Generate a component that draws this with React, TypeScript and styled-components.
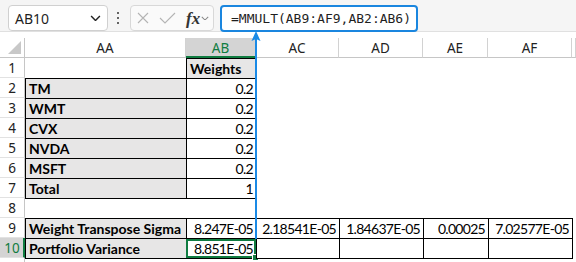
import React from 'react';
import styled, { createGlobalStyle } from 'styled-components';

const Global = createGlobalStyle`
  html, body { margin: 0; padding: 0; background: #fff; }
  body { width: 576px; height: 262px; overflow: hidden; }
`;

const Root = styled.div`
  position: relative;
  width: 576px;
  height: 262px;
  overflow: hidden;
  background: #fff;
`;

const Toolbar = styled.div`
  box-sizing: border-box;
  height: 32px;
  padding: 5px 0 0 8px;
  background: #f5f5f5;
  border-bottom: 1px solid #e0e0e0;
  display: flex;
  align-items: flex-start;
`;

const NameBox = styled.div`
  box-sizing: border-box;
  width: 100px;
  height: 26px;
  background: #fff;
  border: 1px solid #d0d0d0;
  border-radius: 4px;
  display: flex;
  align-items: center;
  justify-content: space-between;
  padding: 0 6px 0 6px;
  font-family: 'Noto Sans', sans-serif;
  font-size: 14px;
  color: #1f1f1f;
`;

const MenuDots = styled.div`
  width: 4px;
  margin: 7px 8px 0 8px;
  display: flex;
  flex-direction: column;
  align-items: center;
  gap: 3px;
  & > span {
    width: 2px;
    height: 2px;
    background: #333;
    border-radius: 1px;
  }
`;

const FxGroup = styled.div`
  box-sizing: border-box;
  width: 84px;
  height: 26px;
  margin-left: 2px;
  border: 1px solid #d8d8d8;
  border-radius: 4px;
  background: #fafafa;
  display: flex;
  align-items: center;
  padding: 0 0 0 6px;
`;

const FxLabel = styled.span`
  font-family: 'Liberation Serif', serif;
  font-style: italic;
  font-weight: 700;
  font-size: 17px;
  color: #333;
  margin: 0 1px 0 10px;
  line-height: 1;
`;

const FormulaBox = styled.div`
  box-sizing: border-box;
  width: 198px;
  height: 27px;
  margin-left: 6px;
  border: 2px solid #1a86df;
  border-radius: 4px;
  background: #fff;
  display: flex;
  align-items: center;
  padding-left: 9px;
  font-family: 'DejaVu Sans Mono', monospace;
  font-size: 13px;
  color: #1f1f1f;
`;

const Sheet = styled.div`
  margin-top: 6px;
  display: grid;
  grid-template-columns: 25px 161px 70px 83px 84px 65px 84px 4px;
  grid-auto-rows: 20px;
`;

const Corner = styled.div`
  box-sizing: border-box;
  border-right: 1px solid #c6c6c6;
  border-bottom: 1px solid #c6c6c6;
  display: flex;
  align-items: flex-end;
  justify-content: flex-end;
  padding: 0 3px 3px 0;
`;

const ColHeader = styled.div<{ $active?: boolean }>`
  box-sizing: border-box;
  display: flex;
  align-items: center;
  justify-content: center;
  font-family: 'Noto Sans', sans-serif;
  font-size: 13.5px;
  color: ${(p) => (p.$active ? '#107c41' : '#222')};
  background: ${(p) => (p.$active ? '#d4d4d4' : '#fff')};
  border-right: 1px solid #d2d2d2;
  border-bottom: ${(p) => (p.$active ? '2px solid #107c41' : '1px solid #c6c6c6')};
  padding-top: ${(p) => (p.$active ? '1px' : '0')};
`;

const RowHeader = styled.div<{ $active?: boolean }>`
  box-sizing: border-box;
  display: flex;
  align-items: center;
  justify-content: center;
  font-family: 'Noto Sans', sans-serif;
  font-size: 13.5px;
  color: ${(p) => (p.$active ? '#107c41' : '#222')};
  background: ${(p) => (p.$active ? '#d4d4d4' : '#fff')};
  border-right: ${(p) => (p.$active ? '2px solid #107c41' : '1px solid #c6c6c6')};
  border-bottom: 1px solid #e2e2e2;
  padding-left: ${(p) => (p.$active ? '1px' : '0')};
`;

const Cell = styled.div<{ $boxed?: boolean; $gray?: boolean; $bold?: boolean; $right?: boolean }>`
  box-sizing: border-box;
  position: relative;
  min-width: 0;
  display: flex;
  align-items: flex-end;
  justify-content: ${(p) => (p.$right ? 'flex-end' : 'flex-start')};
  padding: 0 3px 0 3px;
  font-family: Lato, 'Liberation Sans', sans-serif;
  font-size: 14px;
  line-height: 18px;
  letter-spacing: ${(p) => (p.$right ? '-0.7px' : '0')};
  font-weight: ${(p) => (p.$bold ? 700 : 400)};
  color: #000;
  white-space: nowrap;
  background: ${(p) => (p.$boxed ? (p.$gray ? '#e7e6e6' : '#fff') : 'transparent')};
  border: ${(p) => (p.$boxed ? '1px solid #000' : '0')};
  margin: ${(p) => (p.$boxed ? '0 -1px -1px 0' : '0')};
`;

const Selection = styled.div`
  position: absolute;
  inset: 0 0 0 -1px;
  border: 2px solid #107c41;
  pointer-events: none;
  &::after {
    content: '';
    position: absolute;
    right: -5px;
    bottom: -5px;
    width: 5px;
    height: 5px;
    background: #107c41;
    border: 1px solid #fff;
  }
`;

const Arrow = styled.svg`
  position: absolute;
  left: 251px;
  top: 31px;
`;

type CellData = { t?: string; boxed?: boolean; gray?: boolean; bold?: boolean; right?: boolean; sel?: boolean };

const label = (t: string): CellData => ({ t, boxed: true, gray: true, bold: true });
const num = (t: string): CellData => ({ t, boxed: true, right: true });
const empty: CellData = {};

const rows: CellData[][] = [
  [empty, { t: 'Weights', boxed: true, gray: true, bold: true }, empty, empty, empty, empty, empty],
  [label('TM'), num('0.2'), empty, empty, empty, empty, empty],
  [label('WMT'), num('0.2'), empty, empty, empty, empty, empty],
  [label('CVX'), num('0.2'), empty, empty, empty, empty, empty],
  [label('NVDA'), num('0.2'), empty, empty, empty, empty, empty],
  [label('MSFT'), num('0.2'), empty, empty, empty, empty, empty],
  [label('Total'), num('1'), empty, empty, empty, empty, empty],
  [empty, empty, empty, empty, empty, empty, empty],
  [label('Weight Transpose Sigma'), num('8.247E-05'), num('2.18541E-05'), num('1.84637E-05'), num('0.00025'), num('7.02577E-05'), empty],
  [label('Portfolio Variance'), { ...num('8.851E-05'), sel: true }, num(''), num(''), num(''), num(''), empty],
  [empty, empty, empty, empty, empty, empty, empty],
];

const cols = ['AA', 'AB', 'AC', 'AD', 'AE', 'AF', ''];

const Chevron = ({ w = 10, color = '#333' }: { w?: number; color?: string }) => (
  <svg width={w} height={w * 0.6} viewBox="0 0 10 6">
    <path d="M1 1 L5 5 L9 1" fill="none" stroke={color} strokeWidth="1.3" />
  </svg>
);

export default function App() {
  return (
    <Root>
      <Global />
      <Toolbar>
        <NameBox>
          <span>AB10</span>
          <Chevron w={11} color="#222" />
        </NameBox>
        <MenuDots>
          <span />
          <span />
          <span />
        </MenuDots>
        <FxGroup>
          <svg width="12" height="12" viewBox="0 0 12 12">
            <path d="M1 1 L11 11 M11 1 L1 11" stroke="#b4b4b4" strokeWidth="1.1" fill="none" />
          </svg>
          <svg width="17" height="12" viewBox="0 0 17 12" style={{ marginLeft: 10 }}>
            <path d="M1 6 L6 11 L16 1" stroke="#b4b4b4" strokeWidth="1.1" fill="none" />
          </svg>
          <FxLabel>fx</FxLabel>
          <Chevron w={8} color="#888" />
        </FxGroup>
        <FormulaBox>=MMULT(AB9:AF9,AB2:AB6)</FormulaBox>
      </Toolbar>
      <Sheet>
        <Corner>
          <svg width="13" height="13" viewBox="0 0 13 13">
            <path d="M13 0 L13 13 L0 13 Z" fill="#c8c8c8" />
          </svg>
        </Corner>
        {cols.map((c, i) => (
          <ColHeader key={'h' + i} $active={c === 'AB'}>
            {c}
          </ColHeader>
        ))}
        {rows.map((r, ri) => (
          <React.Fragment key={'r' + ri}>
            <RowHeader $active={ri === 9}>{ri < 10 ? ri + 1 : ''}</RowHeader>
            {r.map((c, ci) => (
              <Cell key={ci} $boxed={c.boxed} $gray={c.gray} $bold={c.bold} $right={c.right}>
                {c.t}
                {c.sel && <Selection />}
              </Cell>
            ))}
          </React.Fragment>
        ))}
      </Sheet>
      <Arrow width="10" height="208" viewBox="0 0 10 208">
        <path d="M5 4 L5 208" stroke="#1a8ae6" strokeWidth="2" />
        <path d="M5 0 L0.5 10 L5 8 L9.5 10 Z" fill="#1a8ae6" />
      </Arrow>
    </Root>
  );
}
